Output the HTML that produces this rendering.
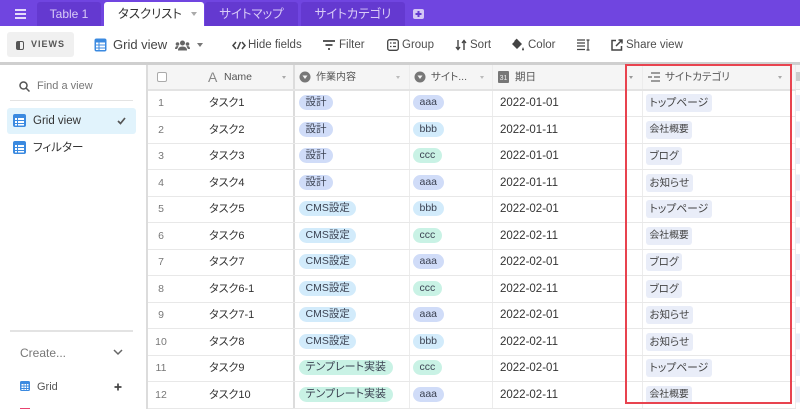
<!DOCTYPE html>
<html><head><meta charset="utf-8">
<style>
html,body{margin:0;padding:0}
body{width:800px;height:409px;overflow:hidden;position:relative;background:#fff;font-family:"Liberation Sans","Noto Sans CJK JP",sans-serif;color:#333;font-feature-settings:"palt";filter:blur(.35px)}
.a{position:absolute;white-space:nowrap}
.tab{position:absolute;top:2px;height:24px;background:#6439d0;color:#d9ccf7;font-size:12px;line-height:24px;text-align:center;border-radius:3px 3px 0 0}
.tb{position:absolute;top:38px;font-size:11.5px;line-height:14px;color:#4d4d4d;white-space:nowrap}
.hd{position:absolute;top:71px;font-size:10.5px;line-height:13px;color:#555;white-space:nowrap}
.v{position:absolute;top:65px;width:1px;height:344px;background:#ececec}
.vd{position:absolute;top:65px;width:2px;height:344px;background:#dcdcdc}
.l{position:absolute;left:148px;width:652px;height:1px;background:#e8e8e8}
.r{position:absolute;left:148px;width:652px;height:26px}
.n{position:absolute;left:0;width:26px;text-align:center;font-size:10.5px;color:#777;line-height:26px;top:0}
.t{position:absolute;left:61px;top:0;font-size:11px;line-height:26px;color:#333;white-space:nowrap}
.p{position:absolute;top:5px;height:15px;line-height:15px;border-radius:8px;font-size:10.5px;padding:0 6.5px;color:#3b4252;white-space:nowrap}
.p.g.w1{font-size:11px}
.dt{position:absolute;left:352px;top:0;font-size:11.5px;line-height:26px;color:#333;white-space:nowrap}
.c{position:absolute;left:498px;top:4px;height:18px;line-height:18px;padding:0 3.5px;border-radius:3px;background:#e9edf8;font-size:10.5px;color:#444;white-space:nowrap}
.c.k{font-size:9.8px;padding:0 3.5px}
.c.w{font-size:10.8px}
.b{background:#d0dcf8}.s{background:#d2ebfb}.g{background:#c9f2e5}
.w1{left:151px}.w2{left:265px}
</style></head><body>
<div class="a" style="left:0;top:0;width:800px;height:26px;background:#7045e0"></div>
<svg class="a" style="left:15px;top:9px" width="12" height="10"><path d="M0 1h11M0 5h11M0 9h11" stroke="#e4dbfa" stroke-width="2"/></svg>
<div class="tab" style="left:37px;width:64px">Table 1</div>
<div class="tab" style="left:104px;width:100px;background:#fff;color:#333;text-align:left;text-indent:14px;font-size:12.4px">タスクリスト</div>
<div class="a" style="left:191px;top:12px;width:0;height:0;border:3px solid transparent;border-top:4px solid #aaa"></div>
<div class="tab" style="left:205px;width:93px;font-size:12.4px">サイトマップ</div>
<div class="tab" style="left:301px;width:104px;font-size:12.400px">サイトカテゴリ</div>
<div class="a" style="left:413px;top:9px;width:11px;height:10px;background:#d4c6f5;border-radius:2px"></div>
<svg class="a" style="left:413px;top:9px" width="11" height="10"><path d="M5.5 2v6M2.5 5h6" stroke="#6439d0" stroke-width="2"/></svg>

<div class="a" style="left:7px;top:32px;width:67px;height:25px;background:#f0f0f0;border-radius:3px"></div>
<div class="a" style="left:16px;top:41px;width:6px;height:7px;border:1px solid #555;border-radius:2px;background:linear-gradient(90deg,#555 50%,#f0f0f0 50%)"></div>
<div class="a" style="left:31px;top:38px;font-size:9px;line-height:13px;font-weight:bold;letter-spacing:1px;color:#555">VIEWS</div>
<svg class="a" style="left:94px;top:38px" width="13" height="14"><rect x=".5" y=".5" width="12" height="13" rx="2" fill="#3b8ae0"/><path d="M2 4.5h9v2H2zM2 7.5h9v2H2zM2 10.5h9v1.500H2z" fill="#fff"/><path d="M5 4v8" stroke="#3b8ae0"/></svg>
<div class="a" style="left:113px;top:37px;font-size:13px;line-height:16px;color:#444">Grid view</div>
<svg class="a" style="left:175px;top:40px" width="15" height="11" fill="#666"><circle cx="7.500" cy="3" r="2.500"/><circle cx="2.500" cy="4" r="1.800"/><circle cx="12.500" cy="4" r="1.800"/><path d="M3 10.500q0-4 4.500-4t4.500 4zM0 9q0-3 2.500-3l1 .5L2 9zM15 9q0-3-2.500-3l-1 .5L13 9z"/></svg>
<div class="a" style="left:197px;top:43px;border:3px solid transparent;border-top:4px solid #777"></div>
<svg class="a" style="left:232px;top:41px" width="14" height="9" fill="none" stroke="#444" stroke-width="1.500"><path d="M4 1 1 4.500 4 8M10 1l3 3.500L10 8M8.500 1 5.500 8"/></svg>
<div class="tb" style="left:248px">Hide fields</div>
<svg class="a" style="left:323px;top:40px" width="13" height="10"><path d="M0 1h12M2.500 5h7M5 9h2" stroke="#444" stroke-width="1.700"/></svg>
<div class="tb" style="left:339px">Filter</div>
<svg class="a" style="left:387px;top:39px" width="12" height="12" fill="none" stroke="#444" stroke-width="1.300"><rect x=".7" y=".7" width="10.600" height="10.600" rx="2"/><path d="M3 4h1.500M6 4h3M3 7.500h1.500M6 7.500h3"/></svg>
<div class="tb" style="left:402px">Group</div>
<svg class="a" style="left:455px;top:39px" width="12" height="12" fill="none" stroke="#444" stroke-width="1.400"><path d="M3 1v9M1 8l2 2.500L5 8M9 11V2M7 4l2-2.500L11 4"/></svg>
<div class="tb" style="left:470px">Sort</div>
<svg class="a" style="left:511px;top:38px" width="14" height="13" fill="#444"><path d="M6 1 11 6 6 11 1 6zM12 9l1 2.500a1 1 0 0 1-2 0z"/><path d="M3.500 3.500 6 1" stroke="#444"/></svg>
<div class="tb" style="left:528px">Color</div>
<svg class="a" style="left:577px;top:39px" width="13" height="12" fill="none" stroke="#444" stroke-width="1.200"><path d="M0 1h8M0 4h8M0 7h8M0 10.500h8M11 1v10M9.500 1h3M9.500 11h3"/></svg>
<svg class="a" style="left:611px;top:39px" width="12" height="12" fill="none" stroke="#444" stroke-width="1.500"><path d="M5 1.500H1v9.500h9.500V7M5 7l6-6M7.500 1H11v3.500"/></svg>
<div class="tb" style="left:626px">Share view</div>

<div class="a" style="left:0;top:62px;width:800px;height:3px;background:#cfcfcf"></div>

<svg class="a" style="left:19px;top:81px" width="11" height="11" fill="none" stroke="#555" stroke-width="1.500"><circle cx="4.500" cy="4.500" r="3.500"/><path d="M7 7l3.500 3.500"/></svg>
<div class="a" style="left:37px;top:79px;font-size:11px;line-height:14px;color:#777">Find a view</div>
<div class="a" style="left:10px;top:100px;width:123px;height:1px;background:#e3e3e3"></div>
<div class="a" style="left:7px;top:108px;width:129px;height:26px;background:#e1f3fc;border-radius:3px"></div>
<svg class="a" style="left:13px;top:114px" width="13" height="13"><rect width="13" height="13" rx="2" fill="#3b8ae0"/><path d="M2 4h9v2H2zM2 7h9v2H2zM2 10h9v1.500H2z" fill="#fff"/><path d="M4.500 4v8" stroke="#3b8ae0"/></svg>
<div class="a" style="left:33px;top:114px;font-size:11.500px;line-height:14px;color:#333">Grid view</div>
<svg class="a" style="left:117px;top:117px" width="9" height="8" fill="none" stroke="#555" stroke-width="1.700"><path d="M1 4l2.500 2.500L8 1"/></svg>
<svg class="a" style="left:13px;top:141px" width="13" height="13"><rect width="13" height="13" rx="2" fill="#3b8ae0"/><path d="M2 4h9v2H2zM2 7h9v2H2zM2 10h9v1.500H2z" fill="#fff"/><path d="M4.500 4v8" stroke="#3b8ae0"/></svg>
<div class="a" style="left:33px;top:141px;font-size:11.500px;line-height:14px;color:#333">フィルター</div>
<div class="a" style="left:10px;top:330px;width:123px;height:2px;background:#e3e3e3"></div>
<div class="a" style="left:20px;top:346px;font-size:12px;line-height:15px;color:#777">Create...</div>
<svg class="a" style="left:113px;top:349px" width="10" height="7" fill="none" stroke="#666" stroke-width="1.500"><path d="M1 1l4 4 4-4"/></svg>
<svg class="a" style="left:20px;top:381px" width="10" height="10"><rect width="10" height="10" rx="1.500" fill="#3b8ae0"/><path d="M1.500 3h7v1.500h-7zM1.500 5.500h7V7h-7zM1.500 8h7v1h-7z" fill="#fff"/><path d="M4 3v6M6.500 3v6" stroke="#3b8ae0" stroke-width=".8"/></svg>
<div class="a" style="left:37px;top:380px;font-size:11px;line-height:14px;color:#555">Grid</div>
<svg class="a" style="left:114px;top:383px" width="8" height="8"><path d="M4 .500v7M.500 4h7" stroke="#444" stroke-width="1.700"/></svg>
<div class="a" style="left:20px;top:408px;width:10px;height:1px;background:#e8436f"></div>

<div class="a" style="left:148px;top:65px;width:652px;height:25px;background:#f5f5f5"></div>
<div class="a" style="left:146px;top:65px;width:2px;height:344px;background:#dcdcdc"></div>
<div class="vd" style="left:293px"></div>
<div class="v" style="left:409px"></div>
<div class="v" style="left:492px"></div>
<div class="v" style="left:642px"></div>
<div class="v" style="left:795px"></div>
<div class="a" style="left:148px;top:89px;width:652px;height:2px;background:#e3e3e3"></div>

<div class="a" style="left:157px;top:72px;width:8px;height:8px;border:1px solid #aaa;border-radius:2px;background:#fff"></div>
<div class="a" style="left:208px;top:69px;font-size:14px;line-height:16px;color:#888">A</div>
<div class="hd" style="left:224px">Name</div>
<div class="a" style="left:282px;top:76px;border:2.500px solid transparent;border-top:3.500px solid #aaa"></div>
<svg class="a" style="left:299px;top:71px" width="12" height="12"><circle cx="6" cy="6" r="5.500" fill="#777"/><path d="M3.500 4.500h5L6 8z" fill="#f5f5f5"/></svg>
<div class="hd" style="left:316px;font-size:10px">作業内容</div>
<div class="a" style="left:396px;top:76px;border:2.500px solid transparent;border-top:3.500px solid #bbb"></div>
<svg class="a" style="left:414px;top:71px" width="12" height="12"><circle cx="6" cy="6" r="5.500" fill="#777"/><path d="M3.500 4.500h5L6 8z" fill="#f5f5f5"/></svg>
<div class="hd" style="left:431px">サイト...</div>
<div class="a" style="left:480px;top:76px;border:2.500px solid transparent;border-top:3.500px solid #bbb"></div>
<div class="a" style="left:498px;top:71px;width:11px;height:12px;background:#777;border-radius:1px;color:#eee;font-size:7px;line-height:15px;text-align:center">31</div>
<div class="hd" style="left:515px">期日</div>
<div class="a" style="left:629px;top:76px;border:2.500px solid transparent;border-top:3.500px solid #999"></div>
<svg class="a" style="left:648px;top:72px" width="12" height="10"><path d="M3 1h9M0 5h4M6 5h6M3 9h9" stroke="#666" stroke-width="1.200"/></svg>
<div class="hd" style="left:665px">サイトカテゴリ</div>
<div class="a" style="left:778px;top:76px;border:2.500px solid transparent;border-top:3.500px solid #aaa"></div>
<div class="a" style="left:796px;top:72px;width:4px;height:9px;background:#ccc"></div>

<div class="l" style="top:116px"></div><div class="l" style="top:143px"></div><div class="l" style="top:169px"></div><div class="l" style="top:196px"></div><div class="l" style="top:222px"></div><div class="l" style="top:249px"></div><div class="l" style="top:275px"></div><div class="l" style="top:302px"></div><div class="l" style="top:328px"></div><div class="l" style="top:355px"></div><div class="l" style="top:381px"></div><div class="l" style="top:408px"></div>

<div class="r" style="top:90px"><div class="n">1</div><div class="t">タスク1</div><div class="p b w1">設計</div><div class="p b w2">aaa</div><div class="dt">2022-01-01</div><div class="c w">トップページ</div></div>
<div class="r" style="top:117px"><div class="n">2</div><div class="t">タスク2</div><div class="p b w1">設計</div><div class="p s w2">bbb</div><div class="dt">2022-01-11</div><div class="c k">会社概要</div></div>
<div class="r" style="top:143px"><div class="n">3</div><div class="t">タスク3</div><div class="p b w1">設計</div><div class="p g w2">ccc</div><div class="dt">2022-01-01</div><div class="c">ブログ</div></div>
<div class="r" style="top:170px"><div class="n">4</div><div class="t">タスク4</div><div class="p b w1">設計</div><div class="p b w2">aaa</div><div class="dt">2022-01-11</div><div class="c">お知らせ</div></div>
<div class="r" style="top:196px"><div class="n">5</div><div class="t">タスク5</div><div class="p s w1">CMS設定</div><div class="p s w2">bbb</div><div class="dt">2022-02-01</div><div class="c w">トップページ</div></div>
<div class="r" style="top:223px"><div class="n">6</div><div class="t">タスク6</div><div class="p s w1">CMS設定</div><div class="p g w2">ccc</div><div class="dt">2022-02-11</div><div class="c k">会社概要</div></div>
<div class="r" style="top:249px"><div class="n">7</div><div class="t">タスク7</div><div class="p s w1">CMS設定</div><div class="p b w2">aaa</div><div class="dt">2022-02-01</div><div class="c">ブログ</div></div>
<div class="r" style="top:276px"><div class="n">8</div><div class="t">タスク6-1</div><div class="p s w1">CMS設定</div><div class="p g w2">ccc</div><div class="dt">2022-02-11</div><div class="c">ブログ</div></div>
<div class="r" style="top:302px"><div class="n">9</div><div class="t">タスク7-1</div><div class="p s w1">CMS設定</div><div class="p b w2">aaa</div><div class="dt">2022-02-01</div><div class="c">お知らせ</div></div>
<div class="r" style="top:329px"><div class="n">10</div><div class="t">タスク8</div><div class="p s w1">CMS設定</div><div class="p s w2">bbb</div><div class="dt">2022-02-11</div><div class="c">お知らせ</div></div>
<div class="r" style="top:355px"><div class="n">11</div><div class="t">タスク9</div><div class="p g w1">テンプレート実装</div><div class="p g w2">ccc</div><div class="dt">2022-02-01</div><div class="c w">トップページ</div></div>
<div class="r" style="top:382px"><div class="n">12</div><div class="t">タスク10</div><div class="p g w1">テンプレート実装</div><div class="p b w2">aaa</div><div class="dt">2022-02-11</div><div class="c k">会社概要</div></div>

<div class="a" style="left:796px;top:90px;width:4px;height:319px;background:repeating-linear-gradient(#fff 0,#fff 5px,#e9edf8 5px,#e9edf8 21px,#fff 21px,#fff 26.500px)"></div>
<div class="a" style="left:625px;top:64px;width:163px;height:336px;border:2px solid #e8434f"></div>
</body></html>
